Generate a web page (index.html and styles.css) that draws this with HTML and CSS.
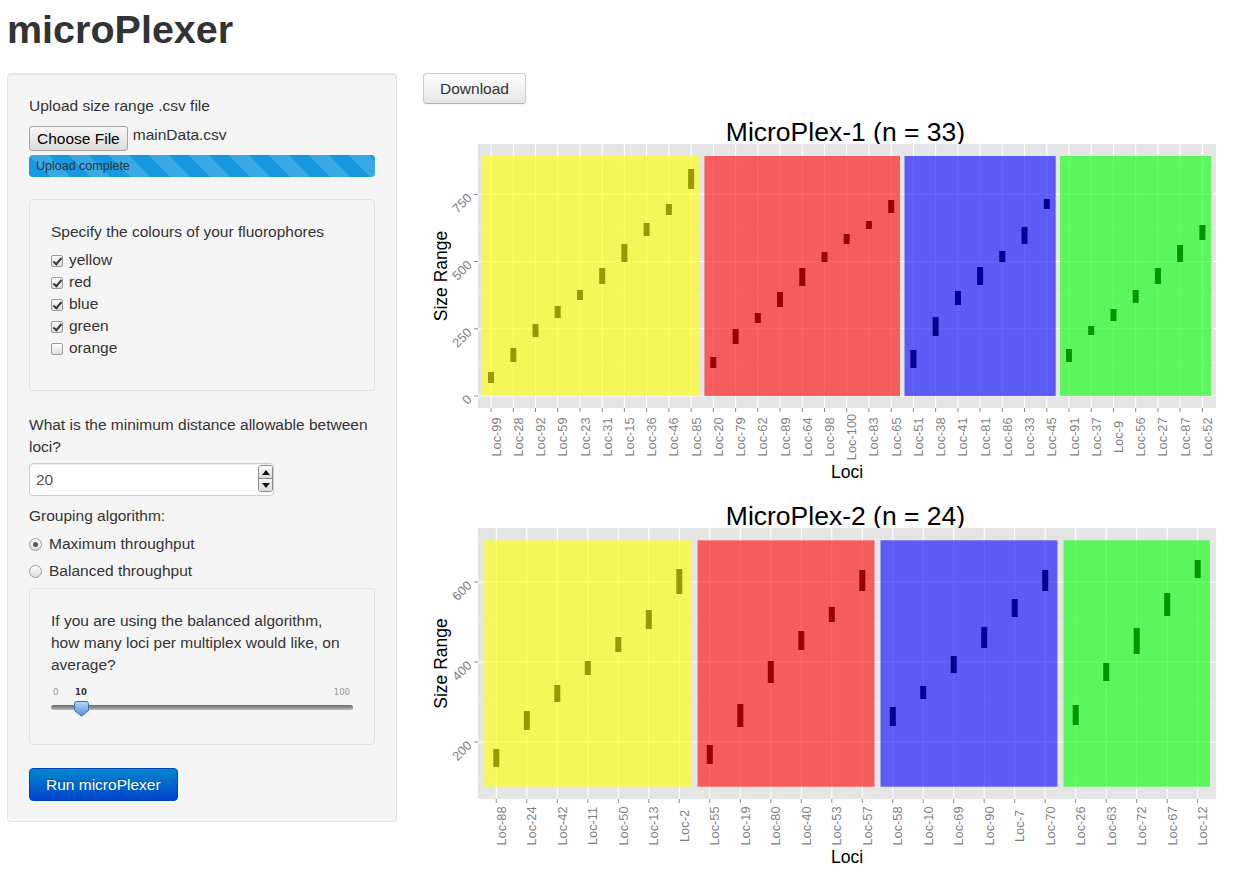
FILE: index.html
```html
<!DOCTYPE html>
<html lang="en">
<head>
<meta charset="utf-8">
<title>microPlexer</title>
<link rel="stylesheet" href="styles.css">
</head>
<body>
<div class="page">
  <h1 class="title">microPlexer</h1>
  <div class="layout">
    <div class="well sidebar">
      <label class="lbl lbl-upload">Upload size range .csv file</label>
      <div class="file-row">
        <span class="file-btn">Choose File</span>
        <span class="file-name">mainData.csv</span>
      </div>
      <div class="progress"><div class="bar">Upload complete</div></div>

      <div class="well inner">
        <label class="lbl lbl-fluor">Specify the colours of your fluorophores</label>
        <div class="checks">
          <label class="check"><span class="box on"></span>yellow</label>
          <label class="check"><span class="box on"></span>red</label>
          <label class="check"><span class="box on"></span>blue</label>
          <label class="check"><span class="box on"></span>green</label>
          <label class="check"><span class="box"></span>orange</label>
        </div>
      </div>

      <label class="lbl lbl-dist">What is the minimum distance allowable between loci?</label>
      <div class="num">
        <span class="num-val">20</span>
        <span class="spin"><span class="spin-btn up"></span><span class="spin-btn down"></span></span>
      </div>

      <label class="lbl lbl-group">Grouping algorithm:</label>
      <label class="radio"><span class="dot on"></span>Maximum throughput</label>
      <label class="radio last"><span class="dot"></span>Balanced throughput</label>

      <div class="well inner inner-slider">
        <label class="lbl lbl-avg">If you are using the balanced algorithm, how many loci per multiplex would like, on average?</label>
        <div class="slider">
          <div class="slider-scale"><span>0</span><span>100</span></div>
          <div class="slider-track"></div>
          <span class="slider-value">10</span>
          <svg class="slider-handle" width="15" height="16" viewBox="0 0 15 16">
            <defs>
              <linearGradient id="hg" x1="0" y1="0" x2="0" y2="1">
                <stop offset="0" stop-color="#b9d8f5"/>
                <stop offset="1" stop-color="#4f8fd6"/>
              </linearGradient>
            </defs>
            <path d="M2.5 0.5H12.5a2 2 0 0 1 2 2V9.5L7.5 15.2L0.5 9.5V2.5a2 2 0 0 1 2-2Z" fill="url(#hg)" stroke="#3f6fa8" stroke-width="1"/>
          </svg>
        </div>
      </div>

      <button class="btn-run">Run microPlexer</button>
    </div>

    <div class="main">
      <button class="btn-dl">Download</button>

      <svg class="plot" width="813" height="380" viewBox="423 110 813 380">
        <text class="ptitle" x="845.5" y="141">MicroPlex-1 (n = 33)</text>
        <rect class="panel-bg" x="478" y="144" width="738" height="264"/>
        <path class="grid-minor" d="M478 362.4H1216M478 295.2H1216M478 227.9H1216M478 160.7H1216"/>
        <path class="grid-major" d="M478 396H1216M478 328.8H1216M478 261.5H1216M478 194.3H1216"/>
        <path class="grid-major" d="M491.0 144v264M513.3 144v264M535.5 144v264M557.7 144v264M580.0 144v264M602.2 144v264M624.4 144v264M646.6 144v264M668.9 144v264M691.1 144v264M713.3 144v264M735.6 144v264M757.8 144v264M780.0 144v264M802.3 144v264M824.5 144v264M846.7 144v264M868.9 144v264M891.2 144v264M913.4 144v264M935.6 144v264M957.9 144v264M980.1 144v264M1002.3 144v264M1024.5 144v264M1046.8 144v264M1069.0 144v264M1091.2 144v264M1113.5 144v264M1135.7 144v264M1157.9 144v264M1180.1 144v264M1202.4 144v264"/>
        <rect class="zone zone-y" x="482.1" y="156" width="217.9" height="240"/>
        <rect class="zone zone-r" x="704.4" y="156" width="195.6" height="240"/>
        <rect class="zone zone-b" x="904.5" y="156" width="151.2" height="240"/>
        <rect class="zone zone-g" x="1060.1" y="156" width="151.2" height="240"/>
        <g class="bars-y">
          <rect x="488.0" y="372" width="6" height="11"/>
          <rect x="510.3" y="348" width="6" height="14"/>
          <rect x="532.5" y="324" width="6" height="13"/>
          <rect x="554.7" y="306" width="6" height="12"/>
          <rect x="577.0" y="290" width="6" height="10"/>
          <rect x="599.2" y="268" width="6" height="16"/>
          <rect x="621.4" y="244" width="6" height="18"/>
          <rect x="643.6" y="223" width="6" height="13"/>
          <rect x="665.9" y="204" width="6" height="11"/>
          <rect x="688.1" y="169" width="6" height="20"/>
        </g>
        <g class="bars-r">
          <rect x="710.3" y="357" width="6" height="11"/>
          <rect x="732.6" y="329" width="6" height="15"/>
          <rect x="754.8" y="313" width="6" height="10"/>
          <rect x="777.0" y="292" width="6" height="15"/>
          <rect x="799.3" y="268" width="6" height="18"/>
          <rect x="821.5" y="252" width="6" height="10"/>
          <rect x="843.7" y="234" width="6" height="10"/>
          <rect x="865.9" y="221" width="6" height="8"/>
          <rect x="888.2" y="200" width="6" height="13"/>
        </g>
        <g class="bars-b">
          <rect x="910.4" y="350" width="6" height="18"/>
          <rect x="932.6" y="317" width="6" height="19"/>
          <rect x="954.9" y="291" width="6" height="14"/>
          <rect x="977.1" y="267" width="6" height="18"/>
          <rect x="999.3" y="251" width="6" height="11"/>
          <rect x="1021.5" y="227" width="6" height="17"/>
          <rect x="1043.8" y="199" width="6" height="10"/>
        </g>
        <g class="bars-g">
          <rect x="1066.0" y="349" width="6" height="13"/>
          <rect x="1088.2" y="326" width="6" height="9"/>
          <rect x="1110.5" y="309" width="6" height="12"/>
          <rect x="1132.7" y="290" width="6" height="13"/>
          <rect x="1154.9" y="268" width="6" height="16"/>
          <rect x="1177.1" y="245" width="6" height="17"/>
          <rect x="1199.4" y="225" width="6" height="15"/>
        </g>
        <path class="tick" d="M474 396H478M474 328.8H478M474 261.5H478M474 194.3H478"/>
        <path class="tick" d="M491.0 408v4M513.3 408v4M535.5 408v4M557.7 408v4M580.0 408v4M602.2 408v4M624.4 408v4M646.6 408v4M668.9 408v4M691.1 408v4M713.3 408v4M735.6 408v4M757.8 408v4M780.0 408v4M802.3 408v4M824.5 408v4M846.7 408v4M868.9 408v4M891.2 408v4M913.4 408v4M935.6 408v4M957.9 408v4M980.1 408v4M1002.3 408v4M1024.5 408v4M1046.8 408v4M1069.0 408v4M1091.2 408v4M1113.5 408v4M1135.7 408v4M1157.9 408v4M1180.1 408v4M1202.4 408v4"/>
        <g class="axis-y">
          <text transform="translate(472.5 400.3) rotate(-45)">0</text>
          <text transform="translate(472.5 333.1) rotate(-45)">250</text>
          <text transform="translate(472.5 265.8) rotate(-45)">500</text>
          <text transform="translate(472.5 198.6) rotate(-45)">750</text>
        </g>
        <g class="axis-x">
          <text transform="translate(500.5 437) rotate(-90)">Loc-99</text>
          <text transform="translate(522.8 437) rotate(-90)">Loc-28</text>
          <text transform="translate(545.0 437) rotate(-90)">Loc-92</text>
          <text transform="translate(567.2 437) rotate(-90)">Loc-59</text>
          <text transform="translate(589.5 437) rotate(-90)">Loc-23</text>
          <text transform="translate(611.7 437) rotate(-90)">Loc-31</text>
          <text transform="translate(633.9 437) rotate(-90)">Loc-15</text>
          <text transform="translate(656.1 437) rotate(-90)">Loc-36</text>
          <text transform="translate(678.4 437) rotate(-90)">Loc-46</text>
          <text transform="translate(700.6 437) rotate(-90)">Loc-85</text>
          <text transform="translate(722.8 437) rotate(-90)">Loc-20</text>
          <text transform="translate(745.1 437) rotate(-90)">Loc-79</text>
          <text transform="translate(767.3 437) rotate(-90)">Loc-62</text>
          <text transform="translate(789.5 437) rotate(-90)">Loc-89</text>
          <text transform="translate(811.8 437) rotate(-90)">Loc-64</text>
          <text transform="translate(834.0 437) rotate(-90)">Loc-98</text>
          <text transform="translate(856.2 437) rotate(-90)">Loc-100</text>
          <text transform="translate(878.4 437) rotate(-90)">Loc-83</text>
          <text transform="translate(900.7 437) rotate(-90)">Loc-65</text>
          <text transform="translate(922.9 437) rotate(-90)">Loc-51</text>
          <text transform="translate(945.1 437) rotate(-90)">Loc-38</text>
          <text transform="translate(967.4 437) rotate(-90)">Loc-41</text>
          <text transform="translate(989.6 437) rotate(-90)">Loc-81</text>
          <text transform="translate(1011.8 437) rotate(-90)">Loc-86</text>
          <text transform="translate(1034.0 437) rotate(-90)">Loc-33</text>
          <text transform="translate(1056.3 437) rotate(-90)">Loc-45</text>
          <text transform="translate(1078.5 437) rotate(-90)">Loc-91</text>
          <text transform="translate(1100.7 437) rotate(-90)">Loc-37</text>
          <text transform="translate(1123.0 437) rotate(-90)">Loc-9</text>
          <text transform="translate(1145.2 437) rotate(-90)">Loc-56</text>
          <text transform="translate(1167.4 437) rotate(-90)">Loc-27</text>
          <text transform="translate(1189.6 437) rotate(-90)">Loc-87</text>
          <text transform="translate(1211.9 437) rotate(-90)">Loc-52</text>
        </g>
        <text class="atitle" x="847" y="478">Loci</text>
        <text class="atitle" transform="translate(446.5 276) rotate(-90)">Size Range</text>
      </svg>

      <svg class="plot" width="813" height="380" viewBox="423 490 813 380">
        <text class="ptitle" x="845.5" y="525">MicroPlex-2 (n = 24)</text>
        <rect class="panel-bg" x="478" y="528" width="738" height="271"/>
        <path class="grid-minor" d="M478 782H1216M478 702H1216M478 622H1216M478 542H1216"/>
        <path class="grid-major" d="M478 742H1216M478 662H1216M478 582H1216"/>
        <path class="grid-major" d="M496.3 528v271M526.8 528v271M557.3 528v271M587.8 528v271M618.3 528v271M648.8 528v271M679.3 528v271M709.8 528v271M740.3 528v271M770.8 528v271M801.3 528v271M831.8 528v271M862.3 528v271M892.8 528v271M923.2 528v271M953.7 528v271M984.2 528v271M1014.7 528v271M1045.2 528v271M1075.7 528v271M1106.2 528v271M1136.7 528v271M1167.2 528v271M1197.7 528v271"/>
        <rect class="zone zone-y" x="484.1" y="540.3" width="207.4" height="246.4"/>
        <rect class="zone zone-r" x="697.6" y="540.3" width="176.9" height="246.4"/>
        <rect class="zone zone-b" x="880.5" y="540.3" width="176.9" height="246.4"/>
        <rect class="zone zone-g" x="1063.5" y="540.3" width="146.4" height="246.4"/>
        <g class="bars-y">
          <rect x="493.3" y="749" width="6" height="18"/>
          <rect x="523.8" y="711" width="6" height="19"/>
          <rect x="554.3" y="685" width="6" height="17"/>
          <rect x="584.8" y="661" width="6" height="14"/>
          <rect x="615.3" y="637" width="6" height="15"/>
          <rect x="645.8" y="610" width="6" height="19"/>
          <rect x="676.3" y="569" width="6" height="25"/>
        </g>
        <g class="bars-r">
          <rect x="706.8" y="745" width="6" height="19"/>
          <rect x="737.3" y="704" width="6" height="23"/>
          <rect x="767.8" y="661" width="6" height="22"/>
          <rect x="798.3" y="631" width="6" height="19"/>
          <rect x="828.8" y="607" width="6" height="15"/>
          <rect x="859.3" y="570" width="6" height="21"/>
        </g>
        <g class="bars-b">
          <rect x="889.8" y="707" width="6" height="19"/>
          <rect x="920.2" y="686" width="6" height="13"/>
          <rect x="950.7" y="656" width="6" height="17"/>
          <rect x="981.2" y="627" width="6" height="21"/>
          <rect x="1011.7" y="599" width="6" height="18"/>
          <rect x="1042.2" y="570" width="6" height="21"/>
        </g>
        <g class="bars-g">
          <rect x="1072.7" y="705" width="6" height="20"/>
          <rect x="1103.2" y="663" width="6" height="18"/>
          <rect x="1133.7" y="628" width="6" height="26"/>
          <rect x="1164.2" y="593" width="6" height="23"/>
          <rect x="1194.7" y="560" width="6" height="18"/>
        </g>
        <path class="tick" d="M474 742H478M474 662H478M474 582H478"/>
        <path class="tick" d="M496.3 799v4M526.8 799v4M557.3 799v4M587.8 799v4M618.3 799v4M648.8 799v4M679.3 799v4M709.8 799v4M740.3 799v4M770.8 799v4M801.3 799v4M831.8 799v4M862.3 799v4M892.8 799v4M923.2 799v4M953.7 799v4M984.2 799v4M1014.7 799v4M1045.2 799v4M1075.7 799v4M1106.2 799v4M1136.7 799v4M1167.2 799v4M1197.7 799v4"/>
        <g class="axis-y">
          <text transform="translate(472.5 746.3) rotate(-45)">200</text>
          <text transform="translate(472.5 666.3) rotate(-45)">400</text>
          <text transform="translate(472.5 586.3) rotate(-45)">600</text>
        </g>
        <g class="axis-x">
          <text transform="translate(505.8 826) rotate(-90)">Loc-88</text>
          <text transform="translate(536.3 826) rotate(-90)">Loc-24</text>
          <text transform="translate(566.8 826) rotate(-90)">Loc-42</text>
          <text transform="translate(597.3 826) rotate(-90)">Loc-11</text>
          <text transform="translate(627.8 826) rotate(-90)">Loc-50</text>
          <text transform="translate(658.3 826) rotate(-90)">Loc-13</text>
          <text transform="translate(688.8 826) rotate(-90)">Loc-2</text>
          <text transform="translate(719.3 826) rotate(-90)">Loc-55</text>
          <text transform="translate(749.8 826) rotate(-90)">Loc-19</text>
          <text transform="translate(780.3 826) rotate(-90)">Loc-80</text>
          <text transform="translate(810.8 826) rotate(-90)">Loc-40</text>
          <text transform="translate(841.3 826) rotate(-90)">Loc-53</text>
          <text transform="translate(871.8 826) rotate(-90)">Loc-57</text>
          <text transform="translate(902.3 826) rotate(-90)">Loc-58</text>
          <text transform="translate(932.7 826) rotate(-90)">Loc-10</text>
          <text transform="translate(963.2 826) rotate(-90)">Loc-69</text>
          <text transform="translate(993.7 826) rotate(-90)">Loc-90</text>
          <text transform="translate(1024.2 826) rotate(-90)">Loc-7</text>
          <text transform="translate(1054.7 826) rotate(-90)">Loc-70</text>
          <text transform="translate(1085.2 826) rotate(-90)">Loc-26</text>
          <text transform="translate(1115.7 826) rotate(-90)">Loc-63</text>
          <text transform="translate(1146.2 826) rotate(-90)">Loc-72</text>
          <text transform="translate(1176.7 826) rotate(-90)">Loc-67</text>
          <text transform="translate(1207.2 826) rotate(-90)">Loc-12</text>
        </g>
        <text class="atitle" x="847" y="862.5">Loci</text>
        <text class="atitle" transform="translate(446.5 663.5) rotate(-90)">Size Range</text>
      </svg>
    </div>
  </div>
</div>
</body>
</html>
```

FILE: styles.css
```css
* { box-sizing: border-box; }
html, body { margin: 0; padding: 0; }
body {
  font-family: "Liberation Sans", Arial, Helvetica, sans-serif;
  font-size: 15.5px;
  line-height: 22px;
  color: #333;
  background: #fff;
}
.page { padding: 7px 0 0 7px; }
.title {
  font-size: 39.5px;
  line-height: 44px;
  font-weight: bold;
  margin: 0 0 22px 0;
  color: #333;
}
.layout { display: flex; align-items: flex-start; gap: 26px; }

.well {
  background: #f5f5f5;
  border: 1px solid #e3e3e3;
  border-radius: 4px;
  box-shadow: inset 0 1px 1px rgba(0,0,0,0.05);
  padding: 21px 21px 20px;
}
.sidebar { width: 390px; flex: none; }
.lbl { display: block; margin: 0; }
.lbl-upload { margin-bottom: 9px; }

.file-row { display: flex; align-items: flex-start; height: 25px; margin-bottom: 4px; }
.file-btn {
  height: 25px;
  padding: 0 7px;
  border: 1px solid #a5a5a5;
  border-radius: 3px;
  background: linear-gradient(#f7f7f7, #dcdcdc);
  color: #000;
  line-height: 23px;
}
.file-name { margin-left: 5px; line-height: 17px; color: #333; }

.progress {
  height: 22px;
  border-radius: 4px;
  overflow: hidden;
  background: #f0f0f0;
  margin-bottom: 22px;
}
.progress .bar {
  height: 100%;
  background-color: #1699de;
  background-image: linear-gradient(45deg, rgba(255,255,255,0.15) 25%, transparent 25%, transparent 50%, rgba(255,255,255,0.15) 50%, rgba(255,255,255,0.15) 75%, transparent 75%, transparent);
  background-size: 40px 40px;
  font-size: 12.5px;
  line-height: 22px;
  padding-left: 7px;
  color: #2a3540;
}

.inner { padding: 21px; margin-bottom: 23px; box-shadow: none; }
.lbl-fluor { margin-bottom: 6px; }
.checks { margin-bottom: 10px; }
.check { display: flex; align-items: center; height: 22px; }
.box {
  position: relative;
  top: 1px;
  width: 12px;
  height: 12px;
  margin-right: 6px;
  border: 1px solid #9c9c9c;
  border-radius: 2px;
  background: linear-gradient(#fdfdfd, #dedede);
}
.box.on::after {
  content: "";
  position: absolute;
  left: 3px;
  top: 0px;
  width: 3px;
  height: 7px;
  border: solid #3a3a3a;
  border-width: 0 2px 2px 0;
  transform: rotate(40deg);
}

.lbl-dist { margin-bottom: 5px; }
.num {
  display: flex;
  align-items: center;
  width: 245px;
  height: 33px;
  margin-bottom: 9px;
  background: #fff;
  border: 1px solid #ccc;
  border-radius: 4px;
  box-shadow: inset 0 1px 1px rgba(0,0,0,0.075);
}
.num-val { flex: 1; padding-left: 6px; color: #555; }
.spin {
  align-self: flex-start;
  display: flex;
  flex-direction: column;
  width: 15px;
  height: 27px;
  margin-top: 1px;
  border: 1px solid #8c8c8c;
  border-radius: 3px;
  overflow: hidden;
}
.spin-btn {
  flex: 1;
  display: flex;
  align-items: center;
  justify-content: center;
  background: linear-gradient(#fbfbfb, #dadada);
}
.spin-btn.up { border-bottom: 1px solid #8c8c8c; }
.spin-btn.up::after {
  content: "";
  border-left: 4px solid transparent;
  border-right: 4px solid transparent;
  border-bottom: 5px solid #111;
}
.spin-btn.down::after {
  content: "";
  border-left: 4px solid transparent;
  border-right: 4px solid transparent;
  border-top: 5px solid #111;
}

.lbl-group { margin-bottom: 6px; }
.radio { display: flex; align-items: center; height: 22px; margin-bottom: 5px; }
.radio.last { margin-bottom: 6px; }
.dot {
  position: relative;
  width: 13px;
  height: 13px;
  margin-right: 7px;
  border: 1px solid #a0a0a0;
  border-radius: 50%;
  background: linear-gradient(#fdfdfd, #dcdcdc);
}
.dot.on::after {
  content: "";
  position: absolute;
  left: 3px;
  top: 3px;
  width: 5px;
  height: 5px;
  border-radius: 50%;
  background: #5a5a5a;
}

.inner-slider { padding: 21px; }
.slider { position: relative; height: 47px; padding-top: 10px; }
.slider-scale {
  display: flex;
  justify-content: space-between;
  padding: 0 3px 0 2px;
  height: 12px;
  font-family: "DejaVu Sans", Verdana, sans-serif;
  font-size: 8.5px;
  line-height: 12px;
  color: #9a9a9a;
}
.slider-track {
  margin-top: 7px;
  height: 5px;
  border-radius: 3px;
  background: linear-gradient(#6c6c6c, #8e8e8e 50%, #bdbdbd);
}
.slider-value {
  position: absolute;
  left: 30px;
  top: 10px;
  transform: translateX(-50%);
  font-family: "DejaVu Sans", Verdana, sans-serif;
  font-size: 8.5px;
  line-height: 12px;
  font-weight: bold;
  color: #333;
}
.slider-handle { position: absolute; left: 23px; top: 25px; }

button { font-family: inherit; }
.btn-run {
  display: block;
  height: 33px;
  padding: 0 16px;
  border: 1px solid #0044b3;
  border-radius: 4px;
  background: linear-gradient(#0088cc, #0044cc);
  color: #fff;
  font-size: 15.5px;
  line-height: 31px;
  text-shadow: 0 -1px 0 rgba(0,0,0,0.25);
}

.main { display: flex; flex-direction: column; align-items: flex-start; }
.btn-dl {
  height: 31px;
  padding: 0 16px;
  margin-bottom: 6px;
  border: 1px solid #cccccc;
  border-bottom-color: #b3b3b3;
  border-radius: 4px;
  background: linear-gradient(#ffffff, #e6e6e6);
  box-shadow: inset 0 1px 0 rgba(255,255,255,0.2), 0 1px 2px rgba(0,0,0,0.05);
  color: #333;
  font-size: 15.5px;
  line-height: 29px;
}

.plot { display: block; font-family: "Liberation Sans", Arial, Helvetica, sans-serif; }
.ptitle { font-size: 26.5px; fill: #000; text-anchor: middle; }
.atitle { font-size: 17.5px; fill: #000; text-anchor: middle; }
.panel-bg { fill: #e5e5e5; }
.grid-minor { stroke: #f2f2f2; stroke-width: 0.6; fill: none; }
.grid-major { stroke: #ffffff; stroke-width: 1.1; fill: none; }
.zone { fill-opacity: 0.6; }
.zone-y { fill: #ffff00; }
.zone-r { fill: #ff0000; }
.zone-b { fill: #0000ff; }
.zone-g { fill: #00ff00; }
.bars-y rect { fill: #999900; }
.bars-r rect { fill: #990000; }
.bars-b rect { fill: #000092; }
.bars-g rect { fill: #009400; }
.tick { stroke: #8a8a8a; stroke-width: 1; fill: none; }
.axis-x text, .axis-y text { font-size: 12.8px; fill: #7f7f7f; }
.axis-x text { text-anchor: middle; }
.axis-y text { text-anchor: end; }
```
